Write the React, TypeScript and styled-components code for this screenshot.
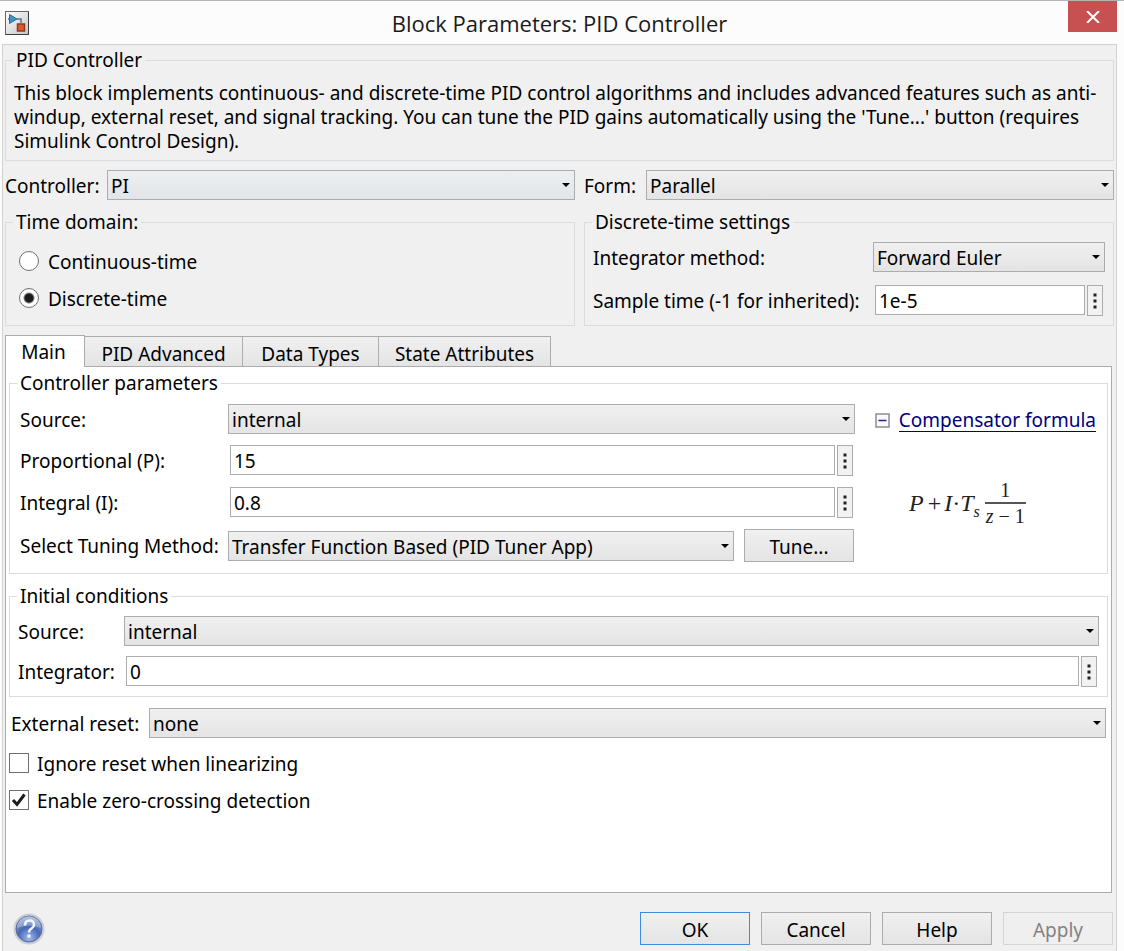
import React, { useState } from 'react';
import styled, { createGlobalStyle } from 'styled-components';

const line = '#dcdcdc';
const edge = '#acacac';
const face = 'linear-gradient(#f0f0f0, #e4e4e4)';

const GlobalStyle = createGlobalStyle`
  *, *::before, *::after { box-sizing: border-box; }
  body {
    margin: 0;
    background: #fcfcfc;
    color: #000;
    font: 19px/24px "Noto Sans", "Open Sans", sans-serif;
  }
  button, input, select { font: inherit; color: inherit; margin: 0; border-radius: 0; }
`;

const Window = styled.div`
  display: flex;
  flex-direction: column;
  min-height: 100vh;
  padding: 0 7px 0 2px;
  border-top: 1px solid #b4b4b4;
`;

const TitleBar = styled.header`
  display: grid;
  grid-template-columns: 49px 1fr 49px;
  height: 43px;
  align-items: center;
`;

const AppIcon = styled.svg`
  display: block;
  margin-left: 3px;
`;

const Title = styled.h1`
  margin: 0;
  text-align: center;
  white-space: nowrap;
  font: 400 22px/32px "Open Sans", "Noto Sans", sans-serif;
  color: #1a1a1a;
`;

const CloseButton = styled.button`
  display: flex;
  align-items: center;
  justify-content: center;
  align-self: start;
  height: 31px;
  padding: 0;
  border: 0;
  background: #c75050;
`;

const Body = styled.main`
  flex: 1;
  display: flex;
  flex-direction: column;
  padding: 3px 2px 6px;
  background: #f0f0f0;
  border: 1px solid #d2d2d2;
  border-bottom: 0;
`;

const Group = styled.fieldset`
  min-width: 0;
  margin: 0;
  padding: 0;
  border: 1px solid ${line};
`;

const Legend = styled.legend`
  margin-left: 7px;
  padding: 0 3px;
`;

const Description = styled.p`
  margin: 0;
  padding: 9px 8px 7px;
`;

const TwoColumns = styled.div`
  display: grid;
  grid-template-columns: 570fr 530fr;
  column-gap: 9px;
  row-gap: 10px;
  margin: 9px 0;
`;

const Row = styled.div<{ $label: number }>`
  display: grid;
  grid-template-columns: ${(p) => p.$label}px minmax(0, 1fr);
  align-items: center;
`;

const Stack = styled.div<{ $gap: number; $pad: string }>`
  display: flex;
  flex-direction: column;
  gap: ${(p) => p.$gap}px;
  padding: ${(p) => p.$pad};
`;

const Label = styled.label`
  padding-top: 1px;
  white-space: nowrap;
`;

const SelectBox = styled.div`
  position: relative;
  min-width: 0;
  &::after {
    content: '';
    position: absolute;
    right: 5px;
    top: 13px;
    border: 4px solid transparent;
    border-top-color: #000;
    border-bottom: 0;
    pointer-events: none;
  }
`;

const NativeSelect = styled.select<{ $hot?: boolean }>`
  appearance: none;
  display: block;
  width: 100%;
  height: 30px;
  padding: 2px 20px 0 3px;
  border: 1px solid ${edge};
  background: ${(p) => (p.$hot ? 'linear-gradient(#eeeff0, #e1e5e9)' : face)};
`;

const ValueBox = styled.div`
  display: grid;
  grid-template-columns: minmax(0, 1fr) 16px;
  gap: 2px;
  padding: 0 2px;
`;

const TextInput = styled.input`
  width: 100%;
  height: 30px;
  padding: 2px 3px 0;
  border: 1px solid ${edge};
  background: #fff;
`;

const DotsButton = styled.button`
  display: flex;
  align-items: center;
  justify-content: center;
  height: 31px;
  padding: 0;
  border: 1px solid ${edge};
  background: #f2f2f2;
`;

const Choice = styled.label`
  display: flex;
  align-items: center;
  gap: 9px;
  height: 24px;
`;

const ChoiceText = styled.span`
  padding-top: 2px;
`;

const Radio = styled.input`
  appearance: none;
  width: 20px;
  height: 20px;
  border: 1px solid #707070;
  border-radius: 50%;
  background: #fff;
  &:checked { background: radial-gradient(circle, #1c1c1c 4px, #fff 6px); }
`;

const CheckFrame = styled.span`
  position: relative;
  display: flex;
  margin-right: -1px;
  svg { position: absolute; inset: 0; pointer-events: none; }
`;

const Checkbox = styled.input`
  appearance: none;
  width: 20px;
  height: 20px;
  border: 1px solid #707070;
  background: #fff;
  &:not(:checked) + svg { display: none; }
`;

const Tabs = styled.div`
  display: flex;
  align-items: flex-end;
`;

const Tab = styled.button<{ $active: boolean; $width: number }>`
  width: ${(p) => p.$width}px;
  height: ${(p) => (p.$active ? 32 : 30)}px;
  padding: ${(p) => (p.$active ? '1px 3px 0 0' : '4px 0 0')};
  margin-bottom: ${(p) => (p.$active ? -1 : 0)}px;
  border: 1px solid ${edge};
  border-bottom: 0;
  border-left-width: ${(p) => (p.$active ? 1 : 0)}px;
  background: ${(p) => (p.$active ? '#fff' : face)};
  z-index: ${(p) => (p.$active ? 1 : 0)};
`;

const TabPanel = styled.section`
  flex: 1;
  display: flex;
  flex-direction: column;
  margin-right: 2px;
  padding: 4px 3px;
  background: #fff;
  border: 1px solid ${edge};
`;

const Parameters = styled.div`
  display: grid;
  grid-template-columns: minmax(0, 1fr) 221px;
  column-gap: 20px;
  padding: 9px 11px 11px 10px;
`;

const TuneRow = styled.div`
  display: grid;
  grid-template-columns: minmax(0, 1fr) 110px;
  gap: 10px;
  align-items: center;
  padding-right: 1px;
`;

const PushButton = styled.button<{ $primary?: boolean }>`
  width: 110px;
  height: 33px;
  padding: 3px 0 0;
  border: 1px solid ${(p) => (p.$primary ? '#3c8ddc' : edge)};
  background: ${face};
  &:disabled { color: #838383; border-color: #d4d4d4; background: #efefef; }
`;

const FormulaHead = styled.div`
  display: flex;
  align-items: center;
  justify-content: space-between;
  height: 32px;
`;

const Toggle = styled.button`
  display: flex;
  padding: 0;
  border: 0;
  background: none;
`;

const Link = styled.a`
  color: #00007c;
  text-decoration: none;
  line-height: 22px;
  border-bottom: 1px solid #00007c;
`;

const Formula = styled.div`
  display: flex;
  align-items: center;
  gap: 5px;
  margin: 42px 0 0 34px;
  font: 24px/24px "Liberation Serif", serif;
  color: #222;
  white-space: nowrap;
  sub { font-size: 16px; line-height: 8px; vertical-align: -6px; }
`;

const Plus = styled.span`
  padding: 0 3px 0 4px;
`;

const Fraction = styled.span`
  display: flex;
  flex-direction: column;
  width: 41px;
  text-align: center;
  font-size: 20px;
  span + span { border-top: 2px solid #555; }
`;

const Footer = styled.footer`
  display: flex;
  gap: 11px;
  align-items: center;
  margin: 19px 1px 0 8px;
`;

const HelpIcon = styled.button`
  display: flex;
  margin-right: auto;
  padding: 0;
  border: 0;
  background: none;
`;

function Select({ id, options, hot }: { id: string; options: string[]; hot?: boolean }) {
  return (
    <SelectBox>
      <NativeSelect id={id} $hot={hot}>
        {options.map((o) => (
          <option key={o}>{o}</option>
        ))}
      </NativeSelect>
    </SelectBox>
  );
}

function Value({ id, value }: { id: string; value: string }) {
  return (
    <ValueBox>
      <TextInput id={id} defaultValue={value} />
      <DotsButton type="button" aria-label="More actions">
        <svg width="4" height="16" viewBox="0 0 4 16" fill="#222">
          <path d="M0.500 0.500h3v3h-3zM0.500 6.500h3v3h-3zM0.500 12.500h3v3h-3z" />
        </svg>
      </DotsButton>
    </ValueBox>
  );
}

function Check({ label, checked }: { label: string; checked?: boolean }) {
  return (
    <Choice>
      <CheckFrame>
        <Checkbox type="checkbox" defaultChecked={checked} />
        <svg width="20" height="20" viewBox="0 0 20 20">
          <path d="M4 10l4 4.500L15.500 4.500" fill="none" stroke="#1c1c1c" strokeWidth="3" />
        </svg>
      </CheckFrame>
      <ChoiceText>{label}</ChoiceText>
    </Choice>
  );
}

const tabs = [
  { name: 'Main', width: 80 },
  { name: 'PID Advanced', width: 158 },
  { name: 'Data Types', width: 136 },
  { name: 'State Attributes', width: 172 },
];

export default function App() {
  const [active, setActive] = useState('Main');
  return (
    <Window>
      <GlobalStyle />
      <TitleBar>
        <AppIcon width="24" height="24" viewBox="0 0 24 24">
          <defs>
            <linearGradient id="tile" x1="0" y1="0" x2="1" y2="1">
              <stop offset="0" stopColor="#fff" />
              <stop offset="1" stopColor="#c4c4c4" />
            </linearGradient>
          </defs>
          <rect x="0.5" y="0.5" width="23" height="23" fill="url(#tile)" stroke="#666" />
          <path d="M1 23.500h22.500V1" fill="none" stroke="#3c3c3c" />
          <path d="M3 8h2M12 8h4v4" fill="none" stroke="#5b7384" strokeWidth="1.500" />
          <path d="M4.500 3.500L12 8l-7.500 4.500z" fill="#3f93c6" stroke="#23709f" />
          <rect x="12.500" y="13" width="7" height="7" fill="#dd5a2c" stroke="#8f3a20" strokeWidth="1.500" />
        </AppIcon>
        <Title>Block Parameters: PID Controller</Title>
        <CloseButton type="button" aria-label="Close">
          <svg width="14" height="12" viewBox="0 0 14 12">
            <path d="M1 0l12 12M13 0L1 12" stroke="#fff" strokeWidth="2" />
          </svg>
        </CloseButton>
      </TitleBar>

      <Body>
        <Group>
          <Legend>PID Controller</Legend>
          <Description>
            This block implements continuous- and discrete-time PID control algorithms and includes advanced
            features such as anti-windup, external reset, and signal tracking. You can tune the PID gains
            automatically using the 'Tune...' button (requires Simulink Control Design).
          </Description>
        </Group>

        <TwoColumns>
          <Row $label={102}>
            <Label htmlFor="controller">Controller:</Label>
            <Select id="controller" options={['PI', 'PID', 'PD', 'P', 'I']} hot />
          </Row>
          <Row $label={62}>
            <Label htmlFor="form">Form:</Label>
            <Select id="form" options={['Parallel', 'Ideal']} />
          </Row>
          <Group>
            <Legend>Time domain:</Legend>
            <Stack $gap={13} $pad="15px 13px">
              <Choice>
                <Radio type="radio" name="domain" />
                <ChoiceText>Continuous-time</ChoiceText>
              </Choice>
              <Choice>
                <Radio type="radio" name="domain" defaultChecked />
                <ChoiceText>Discrete-time</ChoiceText>
              </Choice>
            </Stack>
          </Group>
          <Group>
            <Legend>Discrete-time settings</Legend>
            <Stack $gap={13} $pad="8px 8px 9px">
              <Row $label={280}>
                <Label htmlFor="method">Integrator method:</Label>
                <Select id="method" options={['Forward Euler', 'Backward Euler', 'Trapezoidal']} />
              </Row>
              <Row $label={280}>
                <Label htmlFor="sample">Sample time (-1 for inherited):</Label>
                <Value id="sample" value="1e-5" />
              </Row>
            </Stack>
          </Group>
        </TwoColumns>

        <Tabs role="tablist">
          {tabs.map((t) => (
            <Tab
              key={t.name}
              type="button"
              role="tab"
              aria-selected={t.name === active}
              $active={t.name === active}
              $width={t.width}
              onClick={() => setActive(t.name)}
            >
              {t.name}
            </Tab>
          ))}
        </Tabs>
        <TabPanel role="tabpanel">
          <Group>
            <Legend>Controller parameters</Legend>
            <Parameters>
              <Stack $gap={11} $pad="0">
                <Row $label={208}>
                  <Label htmlFor="source">Source:</Label>
                  <Select id="source" options={['internal', 'external']} />
                </Row>
                <Row $label={208}>
                  <Label htmlFor="p">Proportional (P):</Label>
                  <Value id="p" value="15" />
                </Row>
                <Row $label={208}>
                  <Label htmlFor="i">Integral (I):</Label>
                  <Value id="i" value="0.8" />
                </Row>
                <Row $label={208}>
                  <Label htmlFor="tuning">Select Tuning Method:</Label>
                  <TuneRow>
                    <Select id="tuning" options={['Transfer Function Based (PID Tuner App)', 'Frequency Response Based']} />
                    <PushButton type="button">Tune...</PushButton>
                  </TuneRow>
                </Row>
              </Stack>
              <div>
                <FormulaHead>
                  <Toggle type="button" aria-label="Collapse formula">
                    <svg width="15" height="15" viewBox="0 0 15 15">
                      <rect x="1" y="1" width="13" height="13" fill="#fafafa" stroke="#8c8c94" strokeWidth="1.500" />
                      <path d="M3.500 7.500h8" stroke="#22228c" strokeWidth="1.500" />
                    </svg>
                  </Toggle>
                  <Link href="#formula">Compensator formula</Link>
                </FormulaHead>
                <Formula id="formula">
                  <span>
                    <i>P</i>
                    <Plus>+</Plus>
                    <i>I</i>·<i>T</i>
                    <sub>
                      <i>s</i>
                    </sub>
                  </span>
                  <Fraction>
                    <span>1</span>
                    <span>
                      <i>z</i> − 1
                    </span>
                  </Fraction>
                </Formula>
              </div>
            </Parameters>
          </Group>

          <Stack $gap={10} $pad="10px 0 0">
            <Group>
              <Legend>Initial conditions</Legend>
              <Stack $gap={10} $pad="8px 8px 9px">
                <Row $label={106}>
                  <Label htmlFor="initial">Source:</Label>
                  <Select id="initial" options={['internal', 'external']} />
                </Row>
                <Row $label={106}>
                  <Label htmlFor="integrator">Integrator:</Label>
                  <Value id="integrator" value="0" />
                </Row>
              </Stack>
            </Group>
          </Stack>
          <Stack $gap={13} $pad="11px 2px 13px">
            <Row $label={138}>
              <Label htmlFor="reset">External reset:</Label>
              <Select id="reset" options={['none', 'rising', 'falling', 'either', 'level']} />
            </Row>
          </Stack>
          <Stack $gap={13} $pad="0">
            <Check label="Ignore reset when linearizing" />
            <Check label="Enable zero-crossing detection" checked />
          </Stack>
        </TabPanel>

        <Footer>
          <HelpIcon type="button" aria-label="About this block">
            <svg width="32" height="32" viewBox="0 0 32 32">
              <defs>
                <radialGradient id="orb" cx="0.5" cy="0.85" r="0.85">
                  <stop offset="0" stopColor="#9dbdee" />
                  <stop offset="0.5" stopColor="#4868b4" />
                  <stop offset="1" stopColor="#a3b3da" />
                </radialGradient>
              </defs>
              <circle cx="16" cy="16" r="15.500" fill="#cbced4" />
              <circle cx="16" cy="16" r="13" fill="url(#orb)" stroke="#5a6c9c" />
              <path d="M4 15a12 12 0 0 1 24 0q-12-5-24 0z" fill="#fff" opacity="0.25" />
              <path d="M12 12.500q0-5 4.500-5t4.500 4.500q0 2-2.500 3.500t-2.500 4" fill="none" stroke="#f2f5fb" strokeWidth="2.500" />
              <circle cx="16" cy="23" r="1.800" fill="#f2f5fb" />
            </svg>
          </HelpIcon>
          <PushButton type="button" $primary>OK</PushButton>
          <PushButton type="button">Cancel</PushButton>
          <PushButton type="button">Help</PushButton>
          <PushButton type="button" disabled>Apply</PushButton>
        </Footer>
      </Body>
    </Window>
  );
}
